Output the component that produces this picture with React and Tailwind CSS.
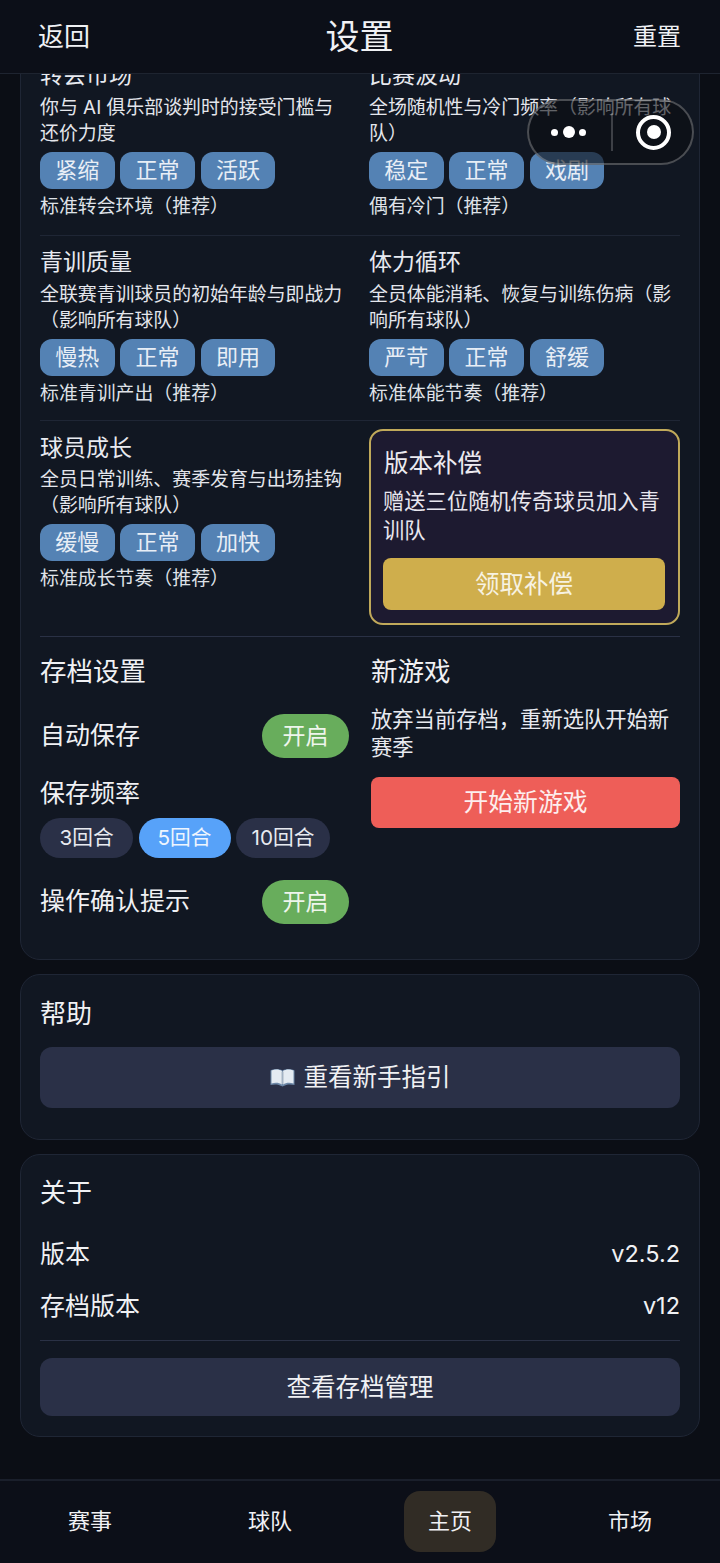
const diffRows = [
  [
    { title: "转会市场", desc: "你与 AI 俱乐部谈判时的接受门槛与还价力度", opts: ["紧缩", "正常", "活跃"], note: "标准转会环境（推荐）" },
    { title: "比赛波动", desc: "全场随机性与冷门频率（影响所有球队）", opts: ["稳定", "正常", "戏剧"], note: "偶有冷门（推荐）" },
  ],
  [
    { title: "青训质量", desc: "全联赛青训球员的初始年龄与即战力（影响所有球队）", opts: ["慢热", "正常", "即用"], note: "标准青训产出（推荐）" },
    { title: "体力循环", desc: "全员体能消耗、恢复与训练伤病（影响所有球队）", opts: ["严苛", "正常", "舒缓"], note: "标准体能节奏（推荐）" },
  ],
];

function Difficulty({ item, tight }) {
  return (
    <div className="min-w-0">
      <div className="text-[23px] leading-[30px] text-[#e8eaf0]">{item.title}</div>
      <div className={`${tight ? "mt-[4px]" : "mt-[5px]"} text-[18.900px] leading-[26px] text-[#e4e6ec]`}>{item.desc}</div>
      <div className="mt-[5px] flex gap-[5.600px]">
        {item.opts.map((o) => (
          <div key={o} className="flex h-[37px] w-[74.700px] items-center justify-center rounded-[12px] bg-[#5482b4] text-[22px] text-[#e8eef6]">
            {o}
          </div>
        ))}
      </div>
      <div className="mt-[5px] text-[18.900px] leading-[26px] text-[#dfe2e8]">{item.note}</div>
    </div>
  );
}

function Toggle() {
  return (
    <div className="flex h-[44px] w-[87px] items-center justify-center rounded-full bg-[#68ad5c] text-[23px] text-[#eef5ec]">
      开启
    </div>
  );
}

function BookIcon() {
  return (
    <svg width="25" height="19" viewBox="0 0 25 19" className="mr-[9px]">
      <path d="M0.500 2.500C4 .5 9 .5 12.500 2.500 16 .5 21 .5 24.500 2.500V17c-4-1-8-1-12 1.500C8.500 16 4.500 16 .5 17z" fill="#6d88a8" />
      <path d="M1.500 2.500C5 1 9 1 12 3v13.500C9 14.500 5 14.500 1.500 15.500z" fill="#e4ebf2" />
      <path d="M23.500 2.500C20 1 16 1 13 3v13.500c3-2 7-2 10.500-1z" fill="#e4ebf2" />
      <path d="M11 3.500h3v12.500h-3z" fill="#b9c4d0" opacity="0.7" />
    </svg>
  );
}

export default function App() {
  return (
    <div className="relative flex h-[1563px] w-[720px] flex-col overflow-hidden bg-[#0b0e15] font-['Inter','Noto_Sans_CJK_SC',sans-serif] text-[#f0f1f4]">
      {/* Header */}
      <div className="relative z-10 grid h-[74px] shrink-0 grid-cols-3 items-center border-b border-[#1e2430] bg-[#0c0f18] pl-[38px] pr-[39px]">
        <div className="text-[26px]">返回</div>
        <div className="text-center text-[34px]">设置</div>
        <div className="text-right text-[24px]">重置</div>
      </div>

      {/* Scrolled content */}
      <div className="min-h-0 flex-1 overflow-hidden px-[20px]">
        <div className="-mt-[35px] flex flex-col gap-[14px]">
          <div className="rounded-[20px] border border-[#1f2635] bg-[#111722] px-[19px] pb-[35px] pt-[20px]">
            <div className="grid grid-cols-[309px_311px] gap-x-[20px] border-b border-[#1f2635] pb-[15px]">
              <Difficulty item={diffRows[0][0]} />
              <Difficulty item={diffRows[0][1]} />
            </div>
            <div className="grid grid-cols-[309px_311px] gap-x-[20px] border-b border-[#1f2635] pb-[13px] pt-[11px]">
              <Difficulty item={diffRows[1][0]} />
              <Difficulty item={diffRows[1][1]} />
            </div>

            <div className="grid grid-cols-[309px_311px] gap-x-[20px] border-b border-[#2a3145] pb-[11px] pt-[8px]">
              <div className="pt-[4px]">
                <Difficulty tight item={{ title: "球员成长", desc: "全员日常训练、赛季发育与出场挂钩（影响所有球队）", opts: ["缓慢", "正常", "加快"], note: "标准成长节奏（推荐）" }} />
              </div>
              <div className="rounded-[14px] border-2 border-[#c0a95a] bg-[#1d1a30] pb-[13px] pl-[12px] pr-[13px] pt-[16px]">
                <div className="ml-[1px] text-[24.500px] leading-[32px] text-[#eceaf0]">版本补偿</div>
                <div className="mt-[8px] text-[21.300px] leading-[29px] text-[#e8e6ee]">赠送三位随机传奇球员加入青训队</div>
                <div className="mt-[13px] flex h-[52px] items-center justify-center rounded-[8px] bg-[#cfae4c] text-[24.500px] text-[#f7f2e2]">
                  领取补偿
                </div>
              </div>
            </div>

            <div className="grid grid-cols-[309px_309px] gap-x-[22px] pt-[16px]">
              <div>
                <div className="text-[26.500px] leading-[36px]">存档设置</div>
                <div className="mt-[25px] flex items-center justify-between">
                  <span className="text-[25px]">自动保存</span>
                  <Toggle />
                </div>
                <div className="mt-[20px] text-[25px] leading-[30px]">保存频率</div>
                <div className="mt-[10px] flex gap-[5.500px]">
                  <div className="flex h-[40px] w-[93px] items-center justify-center rounded-full bg-[#2a3047] text-[20.700px] text-[#e8eaf0]">3回合</div>
                  <div className="flex h-[40px] w-[92px] items-center justify-center rounded-full bg-[#57a2f9] text-[20.700px] text-[#eef5fe]">5回合</div>
                  <div className="flex h-[40px] w-[94px] items-center justify-center rounded-full bg-[#2a3047] text-[20.700px] text-[#e8eaf0]">10回合</div>
                </div>
                <div className="mt-[22px] flex items-center justify-between">
                  <span className="text-[25px]">操作确认提示</span>
                  <Toggle />
                </div>
              </div>
              <div>
                <div className="text-[26.500px] leading-[36px]">新游戏</div>
                <div className="mt-[16px] text-[21.300px] leading-[28px] text-[#e8eaf0]">放弃当前存档，重新选队开始新赛季</div>
                <div className="mt-[16px] flex h-[51px] items-center justify-center rounded-[8px] bg-[#ee5e58] text-[24.800px] text-[#fdeeee]">
                  开始新游戏
                </div>
              </div>
            </div>
          </div>

          <div className="rounded-[20px] border border-[#1f2635] bg-[#111722] px-[19px] pb-[31px] pt-[23px]">
            <div className="text-[26px] leading-[32px]">帮助</div>
            <div className="mt-[17px] flex h-[61px] items-center justify-center rounded-[12px] bg-[#2a3047] text-[24.500px]">
              <BookIcon />
              重看新手指引
            </div>
          </div>

          <div className="rounded-[20px] border border-[#1f2635] bg-[#111722] px-[19px] pb-[20px] pt-[22px]">
            <div className="text-[26px] leading-[32px]">关于</div>
            <div className="mt-[29px] flex items-center justify-between text-[25px] leading-[32px]">
              <span>版本</span>
              <span className="text-[23.500px]">v2.5.2</span>
            </div>
            <div className="mt-[20px] flex items-center justify-between border-b border-[#2a3145] pb-[18px] text-[25px] leading-[32px]">
              <span>存档版本</span>
              <span className="text-[23.500px]">v12</span>
            </div>
            <div className="mt-[17px] flex h-[58px] items-center justify-center rounded-[12px] bg-[#2a3047] text-[24.500px]">
              查看存档管理
            </div>
          </div>
        </div>
      </div>

      {/* Bottom nav */}
      <div className="grid h-[84px] shrink-0 grid-cols-4 items-center border-t-2 border-[#1a1f2b] bg-[#0c0f18] pb-px text-[22px]">
        <div className="text-center">赛事</div>
        <div className="text-center">球队</div>
        <div className="mx-auto flex h-[61px] w-[92px] items-center justify-center rounded-[16px] bg-[#312c25]">主页</div>
        <div className="text-center">市场</div>
      </div>

      {/* WeChat capsule */}
      <div className="absolute left-[527px] top-[99px] z-20 flex h-[66px] w-[167px] items-center rounded-full border-2 border-white/25 bg-[#0b0d13]/60">
        <div className="flex w-[82px] items-center justify-center gap-[4.500px] pr-[3px]">
          <span className="h-[7px] w-[7px] rounded-full bg-white" />
          <span className="h-[12px] w-[12px] rounded-full bg-white" />
          <span className="h-[7px] w-[7px] rounded-full bg-white" />
        </div>
        <div className="h-[38px] w-[2px] bg-white/20" />
        <div className="flex flex-1 items-center justify-center pl-[2px]">
          <div className="flex h-[35px] w-[35px] items-center justify-center rounded-full border-[4px] border-white">
            <span className="h-[14px] w-[14px] rounded-full bg-white" />
          </div>
        </div>
      </div>
    </div>
  );
}
